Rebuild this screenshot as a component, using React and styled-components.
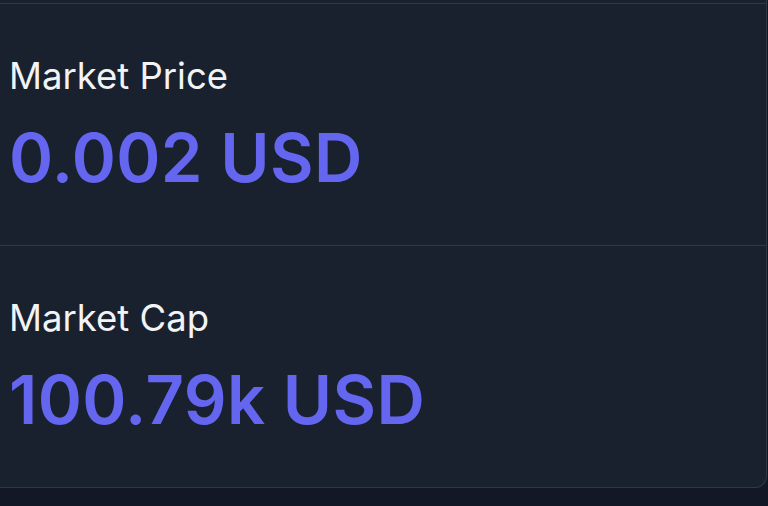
import styled, { createGlobalStyle } from "styled-components"

const Global = createGlobalStyle`
  html, body {
    margin: 0;
    padding: 0;
    background-color: #121826;
  }
  body {
    width: 768px;
    height: 506px;
    overflow: hidden;
    font-family: "Inter", "Noto Sans", sans-serif;
  }
`

const Card = styled.div`
  width: 766px;
  background-color: #19212f;
  border: 1px solid #2f3849;
  border-left: none;
  border-top: none;
  border-bottom-right-radius: 12px;
  display: flex;
  flex-direction: column;
`

const Stub = styled.div`
  height: 3px;
`

const Stat = styled.section`
  height: 242px;
  border-top: 1px solid #2f3849;
  padding: 2px 0 0 9px;
  display: flex;
  flex-direction: column;
  justify-content: center;
  box-sizing: border-box;
`

const Label = styled.h3`
  margin: 0;
  font-size: 36.5px;
  font-weight: 400;
  color: #f2f3f5;
  line-height: 44px;
`

const Value = styled.p`
  margin: 20px 0 0;
  font-size: 67px;
  font-weight: 600;
  color: #6466f0;
  line-height: 80px;
  letter-spacing: 0.4px;
`

const stats = [
  { label: "Market Price", value: "0.002 USD" },
  { label: "Market Cap", value: "100.79k USD" },
]

const App = () => {
  return (
    <>
      <Global />
      <Card>
        <Stub />
        {stats.map((s) => (
          <Stat key={s.label}>
            <Label>{s.label}</Label>
            <Value>{s.value}</Value>
          </Stat>
        ))}
      </Card>
    </>
  )
}

export default App
